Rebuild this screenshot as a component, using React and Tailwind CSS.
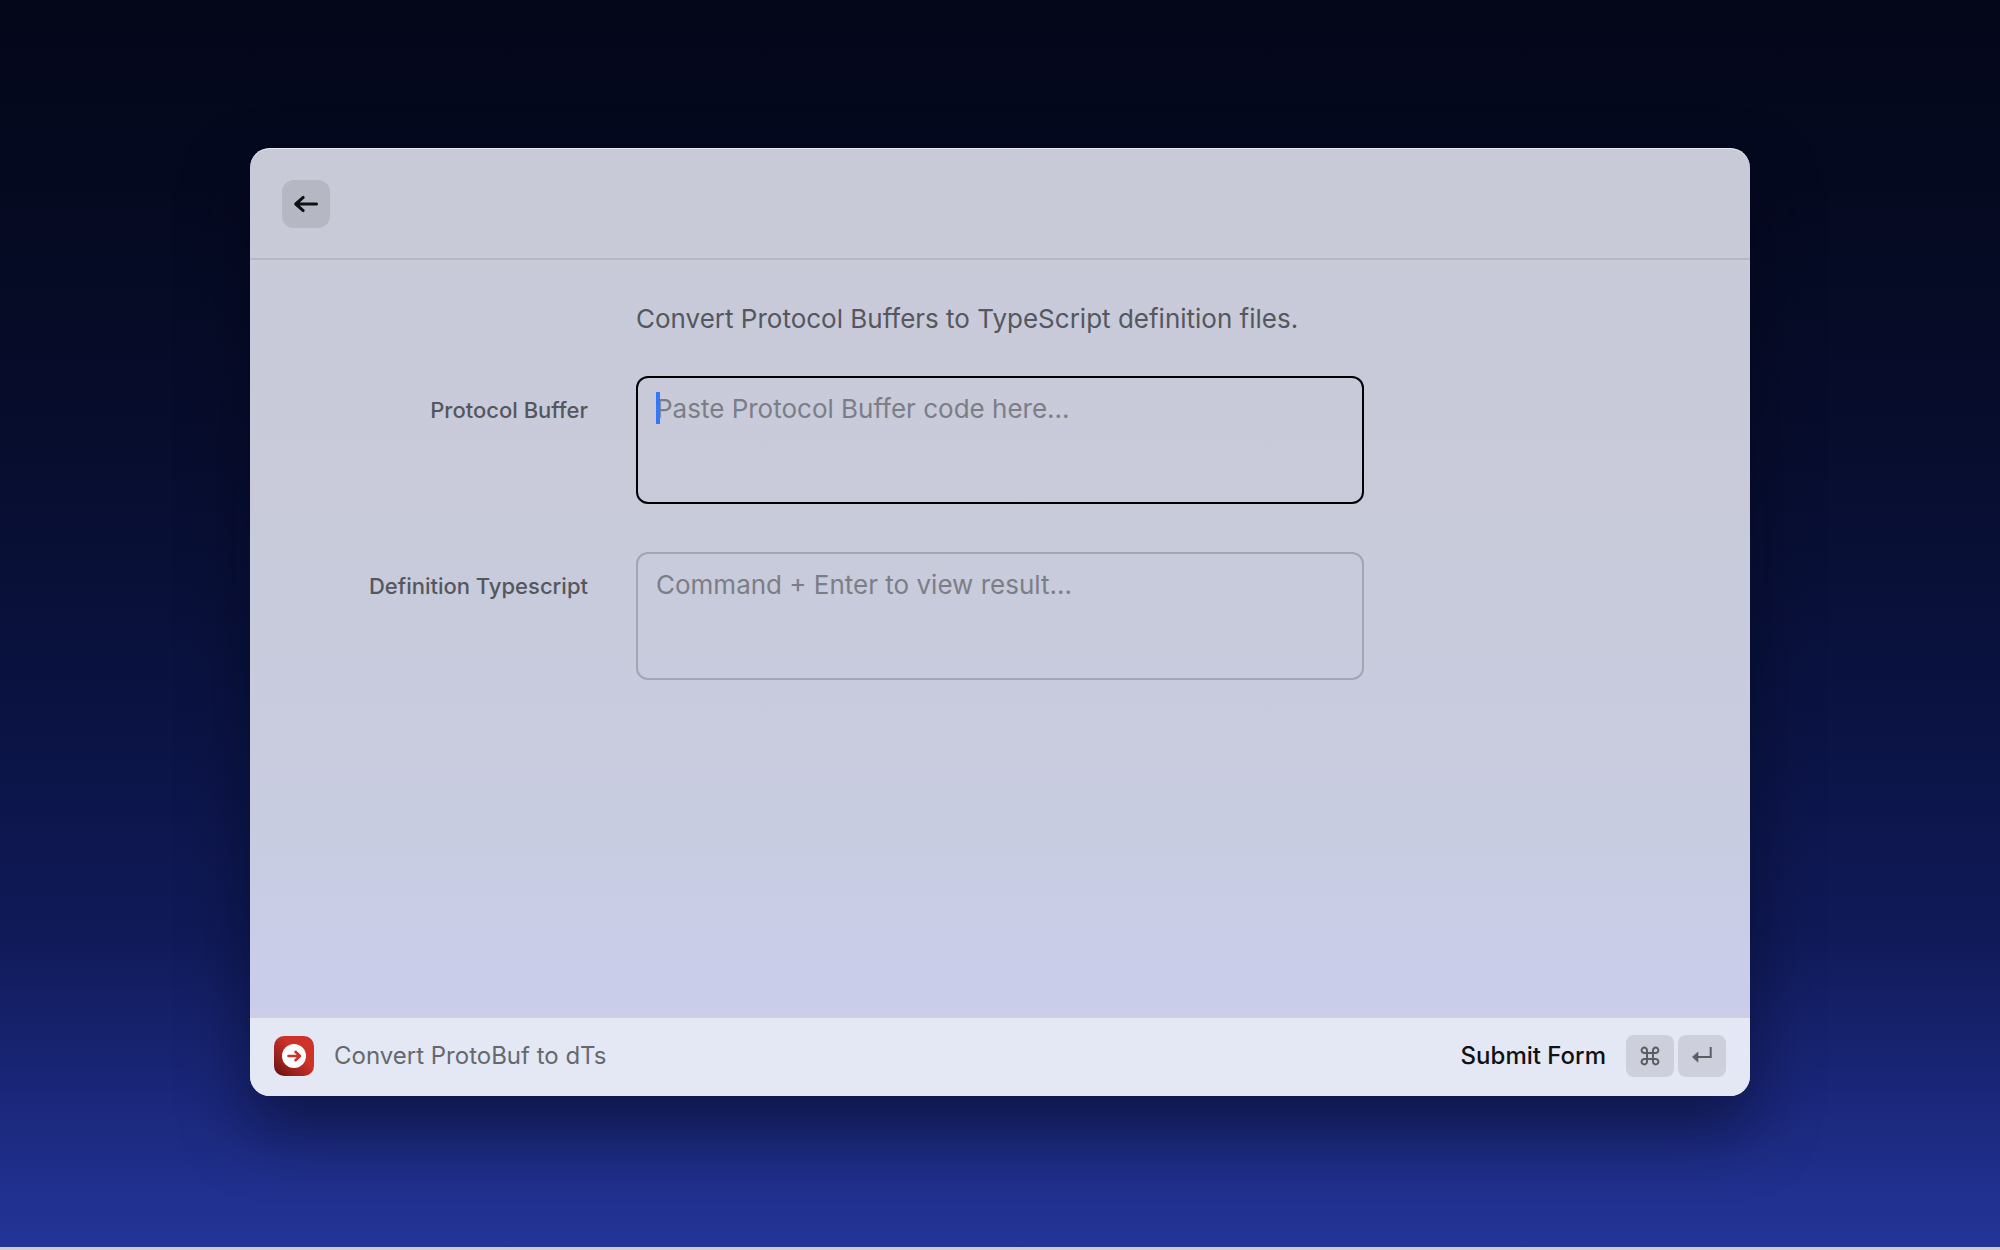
function BackArrow() {
  return (
    <svg aria-hidden="true" viewBox="0 0 32 32" className="size-8" fill="none" stroke="#0f1112" strokeWidth="3" strokeLinecap="round" strokeLinejoin="round">
      <path d="M26.5 16H6M13.2 9.4 5.7 16l7.5 6.6" />
    </svg>
  );
}

function CommandIcon() {
  return (
    <svg aria-hidden="true" viewBox="0 0 20 20" className="size-5" fill="none" stroke="#5b5d62" strokeWidth="2">
      <path d="M7 7h6v6H7zM7 7H4.4A2.7 2.7 0 1 1 7 4.4zM13 7V4.4A2.7 2.7 0 1 1 15.6 7zM13 13h2.6A2.7 2.7 0 1 1 13 15.6zM7 13v2.6A2.7 2.7 0 1 1 4.4 13z" />
    </svg>
  );
}

function ReturnIcon() {
  return (
    <svg aria-hidden="true" viewBox="0 0 20 20" className="size-5">
      <path d="M18.7 1v10H6" fill="none" stroke="#5b5d62" strokeWidth="2" />
      <path d="M6 6v10.2L0.4 11z" fill="#5b5d62" stroke="#5b5d62" strokeWidth="0.6" strokeLinejoin="round" />
    </svg>
  );
}

function ExtensionIcon() {
  return (
    <svg aria-hidden="true" viewBox="0 0 40 40" className="size-10 shrink-0">
      <defs>
        <linearGradient id="tile" x1="0" y1="1" x2="0.6" y2="0.4">
          <stop offset="0" stopColor="#5a0f0e" />
          <stop offset="0.35" stopColor="#8c1d1a" />
          <stop offset="1" stopColor="#cd3329" />
        </linearGradient>
      </defs>
      <rect width="40" height="40" rx="10" fill="url(#tile)" />
      <circle cx="20" cy="20" r="12" fill="#fff" />
      <path d="M14.5 20h11M21.5 15.8l4.4 4.2-4.4 4.2" fill="none" stroke="#cd3329" strokeWidth="2.6" strokeLinecap="round" strokeLinejoin="round" />
    </svg>
  );
}

const FIELD =
  "block w-full h-32 resize-none rounded-xl border-2 bg-transparent px-[18px] pt-[15px] pb-3 text-[26px] leading-8 text-[#1c1d20] placeholder:text-[#7c7e87] placeholder:opacity-100 outline-none";

export default function App() {
  return (
    <div className="flex min-h-screen flex-col bg-[#d0cdcf] font-['Inter',sans-serif]">
      <div className="flex flex-1 items-center justify-center bg-[linear-gradient(to_bottom,#04071a_0%,#050920_15%,#070d2d_35%,#0a1240_55%,#101a58_75%,#1a277a_88%,#243599_100%)] pb-[3px]">
        <section className="flex w-3/4 flex-col overflow-hidden rounded-[20px] bg-[linear-gradient(to_bottom,#c8cad8_0%,#c8cbdb_45%,#c8cce0_70%,#cacdeb_92%)] shadow-[inset_0_1px_0_rgba(255,255,255,0.6),0_32px_64px_rgba(3,5,22,0.5)]">
          <header className="border-b-2 border-[#b5b7c3] px-8 pt-8 pb-[30px]">
            <button type="button" aria-label="Back" className="flex size-12 items-center justify-center rounded-xl bg-[#b5b7c3]">
              <BackArrow />
            </button>
          </header>

          <form id="convert" className="min-h-[756px]" onSubmit={(e) => e.preventDefault()}>
            <div className="grid grid-cols-[338px_minmax(0,728px)] gap-12 pt-10">
              <p className="col-start-2 -mb-3 h-10 text-[26px] leading-[38px] text-[#55575e]">
                Convert Protocol Buffers to TypeScript definition files.
              </p>

              <label htmlFor="source" className="pt-[18px] text-right text-[22px] leading-8 font-medium text-[#55575e]">
                Protocol Buffer
              </label>
              <div className="relative">
                <textarea id="source" placeholder="Paste Protocol Buffer code here..." className={`${FIELD} border-black caret-[#3478f6]`} />
                <span aria-hidden="true" className="absolute top-4 left-5 h-8 w-1 bg-[#3478f6]" />
              </div>

              <label htmlFor="result" className="pt-[18px] text-right text-[22px] leading-8 font-medium text-[#55575e]">
                Definition Typescript
              </label>
              <textarea id="result" placeholder="Command + Enter to view result..." className={`${FIELD} border-[#a3a5b5]`} />
            </div>
          </form>

          <footer className="flex items-center justify-between border-t-2 border-[#cdd0dc] bg-[#e3e8f4] px-6 pt-[17px] pb-[19px]">
            <div className="flex items-center gap-5">
              <ExtensionIcon />
              <span className="text-[24px] leading-8 text-[#66686d]">Convert ProtoBuf to dTs</span>
            </div>
            <button type="submit" form="convert" className="flex items-center gap-5 text-[24px] leading-8 font-medium text-[#0f1112]">
              Submit Form
              <span className="flex gap-1">
                <kbd className="flex h-[42px] w-12 items-center justify-center rounded-lg bg-[#cdd0dc]">
                  <CommandIcon />
                </kbd>
                <kbd className="flex h-[42px] w-12 items-center justify-center rounded-lg bg-[#cdd0dc]">
                  <ReturnIcon />
                </kbd>
              </span>
            </button>
          </footer>
        </section>
      </div>
      <div className="h-[3px]" />
    </div>
  );
}
